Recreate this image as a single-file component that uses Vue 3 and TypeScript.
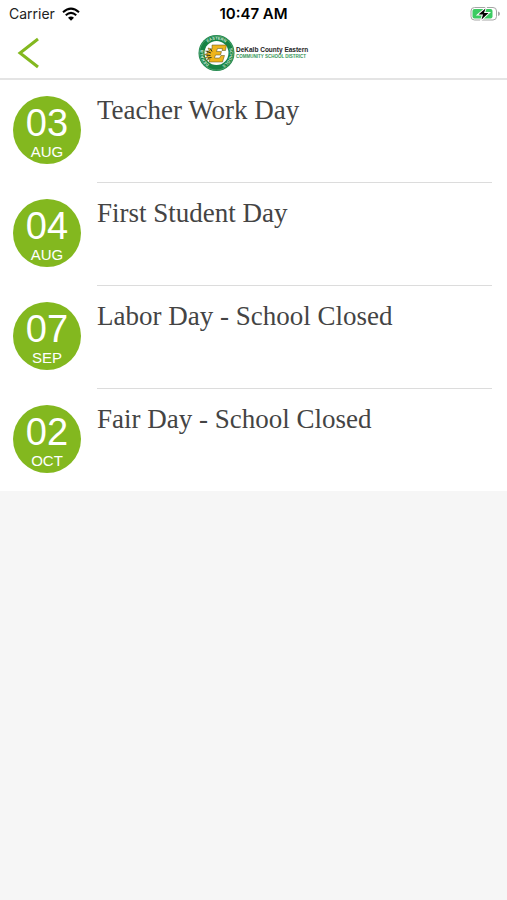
<script setup lang="ts">
interface SchoolEvent {
  day: string
  month: string
  title: string
}

const events: SchoolEvent[] = [
  { day: '03', month: 'AUG', title: 'Teacher Work Day' },
  { day: '04', month: 'AUG', title: 'First Student Day' },
  { day: '07', month: 'SEP', title: 'Labor Day - School Closed' },
  { day: '02', month: 'OCT', title: 'Fair Day - School Closed' },
]
</script>

<template>
  <div class="screen">
    <header class="header">
      <div class="status">
        <div class="carrier">
          <span>Carrier</span>
          <svg class="wifi" viewBox="0 0 36 28" aria-hidden="true">
            <path d="M2 10.500Q18-4 34 10.500" />
            <path d="M7.500 16.500Q18 7 28.500 16.500" />
            <path class="wifi-dot" d="M12 21.500Q18 16 24 21.500L18 27.500Z" />
          </svg>
        </div>
        <time class="clock">10:47 AM</time>
        <svg class="battery" viewBox="0 0 60 32" aria-hidden="true">
          <rect x="2" y="3" width="51" height="25" rx="7" fill="#fff" stroke="#a6a6a6" stroke-width="2" />
          <path d="M56 11Q60 12 60 15.500T56 20Z" fill="#a6a6a6" />
          <rect x="5" y="6" width="40" height="19" rx="4" fill="#3ccb62" />
          <path d="M31 5L17 17H26L23 27L37 14H28Z" fill="#000" stroke="#fff" stroke-width="4" paint-order="stroke" />
        </svg>
      </div>
      <nav class="nav">
        <button class="back" type="button" aria-label="Back">
          <svg viewBox="0 0 22 32" aria-hidden="true">
            <path d="M21 2L3 16L21 30" />
          </svg>
        </button>
        <svg class="logo" viewBox="0 0 222 74" role="img" aria-label="DeKalb County Eastern Community School District">
          <defs>
            <path id="ring-top" d="M10 36A27 27 0 0 1 64 36" />
            <path id="ring-left" d="M37 63A27 27 0 0 1 18 17" />
            <path id="ring-right" d="M56 17A27 27 0 0 1 37 63" />
          </defs>
          <circle cx="37" cy="36" r="36" fill="#178344" />
          <circle cx="37" cy="36" r="34" fill="none" stroke="#75b78e" stroke-width="1" />
          <circle cx="37" cy="36" r="24" fill="#fff" />
          <g class="ring-text">
            <text><textPath href="#ring-top" startOffset="50%" text-anchor="middle">EASTERN</textPath></text>
            <text><textPath href="#ring-left" startOffset="50%" text-anchor="middle">DEKALB</textPath></text>
            <text><textPath href="#ring-right" startOffset="50%" text-anchor="middle">SCHOOLS</textPath></text>
          </g>
          <path
            d="M28 20H57L55 31H48L49 27H39L37 33H47L45 40H35L33 46H43L46 41H53L49 54H22L24 48L17 51L21 46L14 46L20 42L13 39L20 36L15 32L23 32L20 26L28 28Z"
            fill="#eeb41c" stroke="#4c4a1c" stroke-width="1" stroke-linejoin="round"
          />
          <path d="M18 33L26 36M17 40L25 41M20 46L27 45M25 28L28 33" stroke="#26301b" stroke-width="2" />
          <text x="76" y="34" class="logo-name">DeKalb County Eastern</text>
          <text x="76" y="45" class="logo-sub">COMMUNITY SCHOOL DISTRICT</text>
        </svg>
      </nav>
    </header>
    <main>
      <ul class="events">
        <li v-for="event in events" :key="event.title" class="event">
          <time class="date">
            <span class="day">{{ event.day }}</span>
            <span class="month">{{ event.month }}</span>
          </time>
          <h2 class="title">{{ event.title }}</h2>
        </li>
      </ul>
    </main>
  </div>
</template>

<style>
body {
  margin: 0;
  background: #f6f6f6;
}
</style>

<style scoped>
.screen {
  min-height: 100vh;
  background: #f6f6f6;
  font-family: "Liberation Sans", Arial, sans-serif;
}

.header {
  background: #fff;
  border-bottom: 2px solid #e4e4e4;
}

.status {
  display: grid;
  grid-template-columns: 1fr auto 1fr;
  align-items: center;
  height: 28px;
  padding: 0 7px;
  font-family: Inter, sans-serif;
  font-size: 14px;
  line-height: 20px;
  color: #222;
}

.carrier {
  display: flex;
  align-items: center;
  gap: 7px;
  padding-left: 2px;
}

.wifi {
  width: 18px;
  height: 14px;
  fill: none;
  stroke: #000;
  stroke-width: 4;
}

.wifi-dot {
  fill: #000;
  stroke: none;
}

.clock {
  font-size: 15px;
  font-weight: 600;
  color: #000;
}

.battery {
  justify-self: end;
  width: 30px;
  height: 16px;
}

.nav {
  display: grid;
  grid-template-columns: 1fr auto 1fr;
  align-items: center;
  height: 50px;
  padding: 0 9px;
}

.back {
  display: flex;
  align-items: center;
  justify-content: center;
  justify-self: start;
  width: 38px;
  height: 44px;
  padding: 0;
  border: 0;
  background: none;
  cursor: pointer;
}

.back svg {
  width: 22px;
  height: 32px;
  fill: none;
  stroke: #83b81f;
  stroke-width: 3;
}

.logo {
  width: 111px;
  height: 37px;
}

.ring-text {
  font-size: 8px;
  font-weight: 700;
  fill: #d5eadc;
}

.logo-name {
  font-size: 13px;
  font-weight: 700;
  fill: #222;
}

.logo-sub {
  font-size: 9px;
  font-weight: 700;
  fill: #369458;
}

.events {
  margin: 0;
  padding: 0 15px 0 13px;
  list-style: none;
  background: #fff;
}

.event {
  display: grid;
  grid-template-columns: 68px 1fr;
  column-gap: 16px;
}

.date {
  display: flex;
  flex-direction: column;
  align-items: center;
  box-sizing: border-box;
  width: 68px;
  height: 68px;
  margin-top: 16px;
  padding-top: 6px;
  border-radius: 50%;
  background: #83b81f;
  color: #fff;
}

.day {
  font-size: 38px;
  line-height: 42px;
}

.month {
  font-size: 15px;
  line-height: 16px;
}

.title {
  min-height: 72px;
  margin: 0;
  padding: 14px 0 16px;
  border-bottom: 1px solid #dcdcdc;
  font-family: "Liberation Serif", "Times New Roman", serif;
  font-size: 27px;
  font-weight: 400;
  line-height: 32px;
  color: #444;
}

.event:last-child .title {
  border-bottom: 0;
}
</style>
